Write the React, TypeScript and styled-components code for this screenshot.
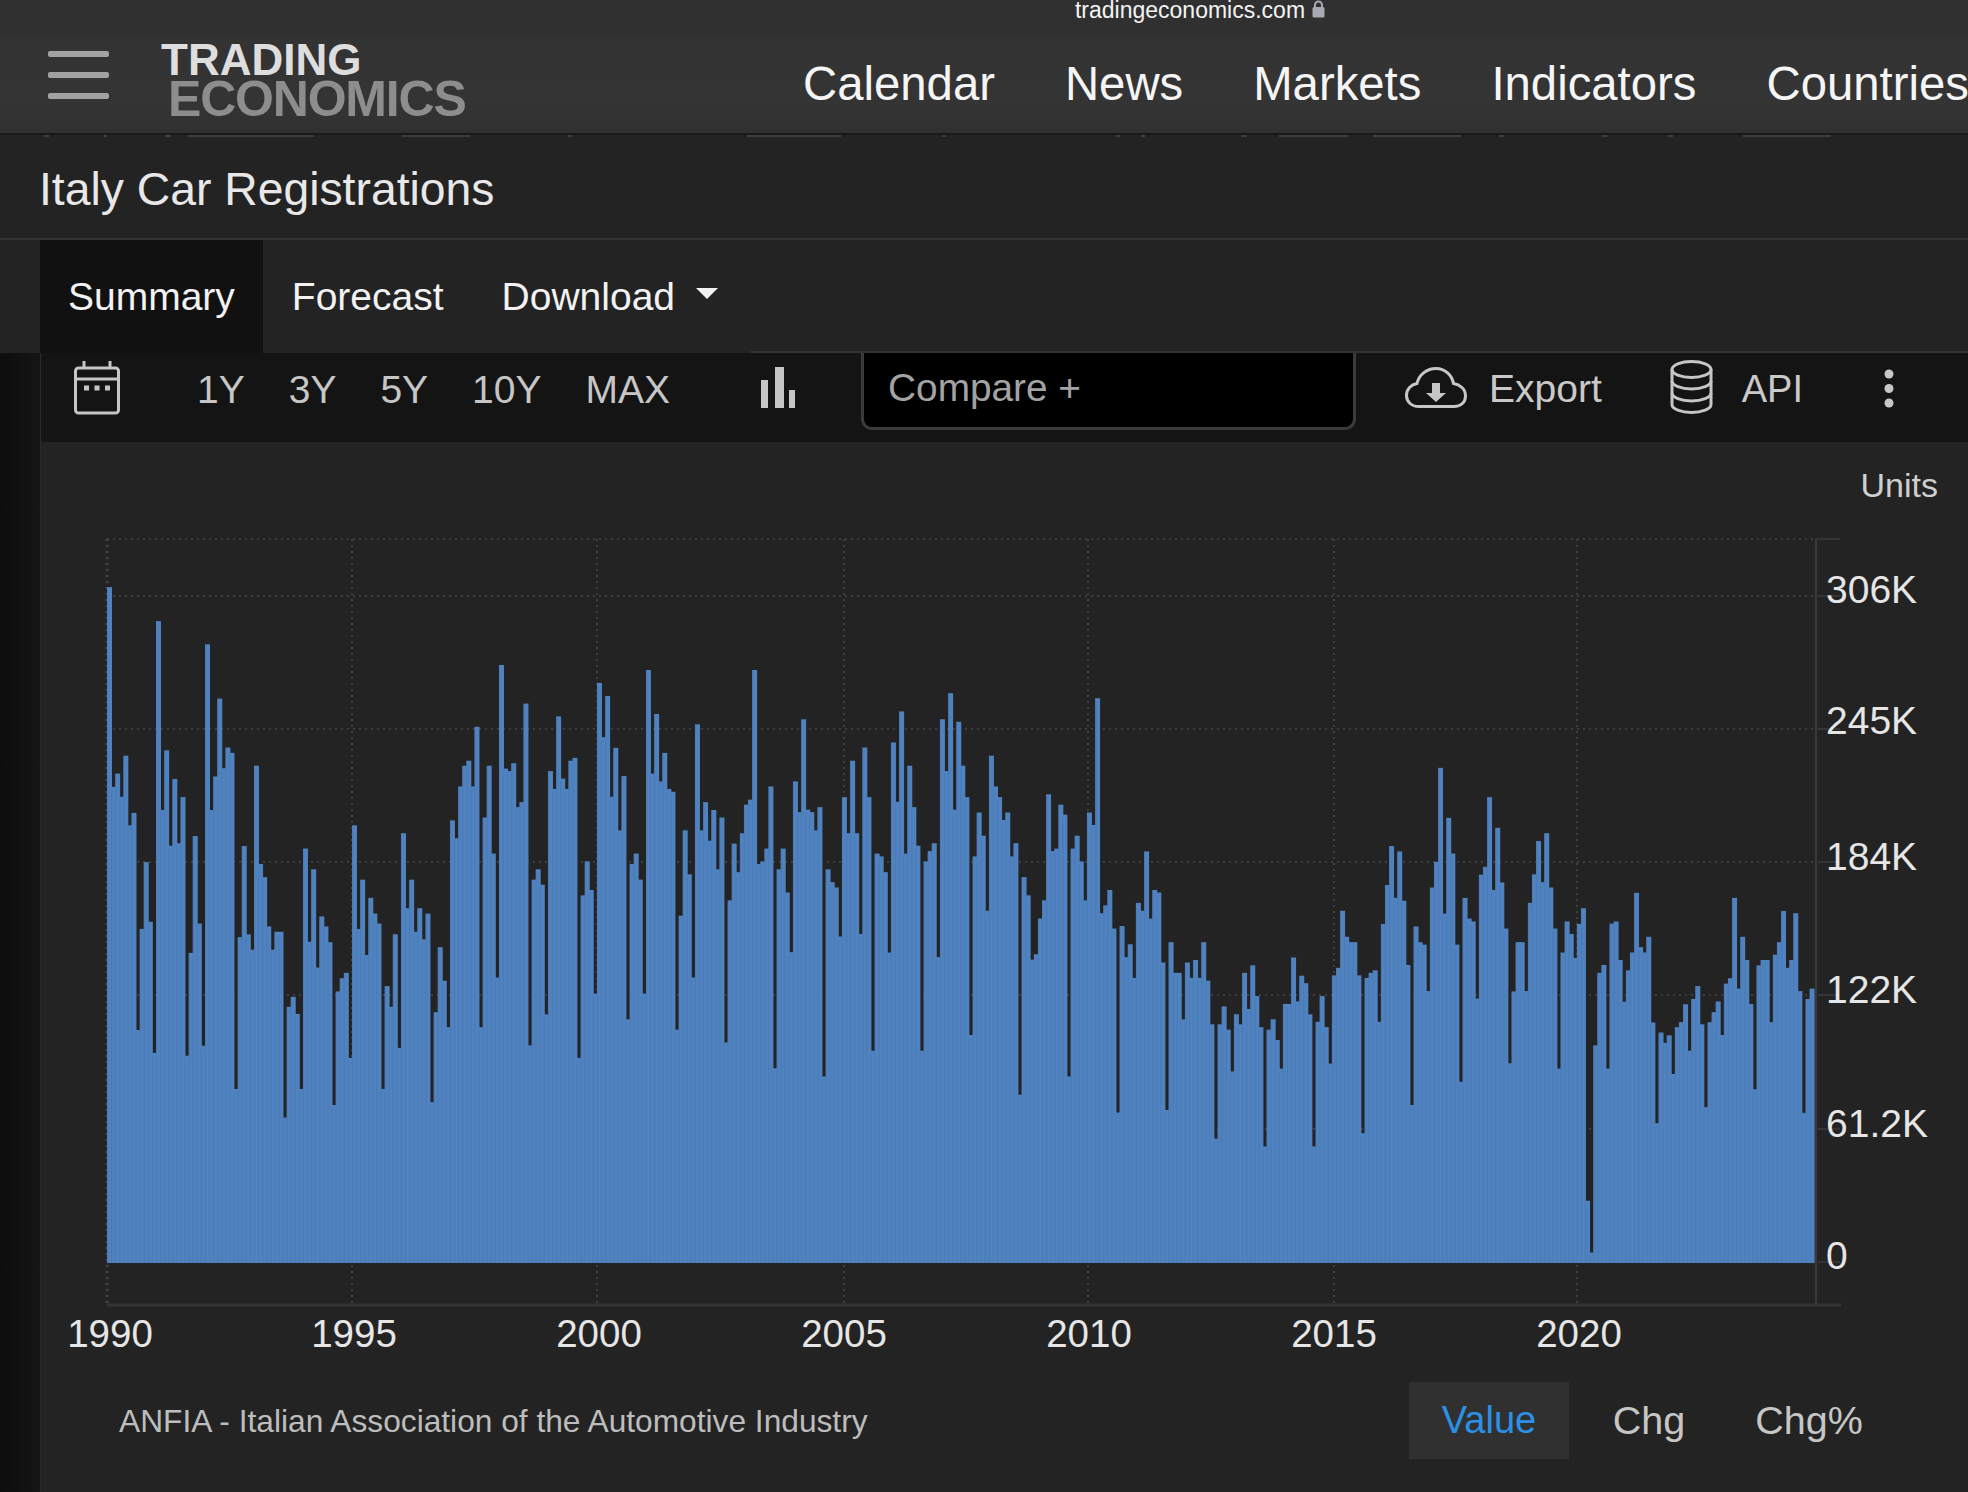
import React from 'react';
import styled, { createGlobalStyle } from 'styled-components';

const GlobalStyle = createGlobalStyle`
  html, body {
    margin: 0;
    padding: 0;
    background: #232323;
  }
  * {
    box-sizing: border-box;
  }
`;

const PageContainer = styled.div`
  display: flex;
  flex-direction: column;
  width: 1968px;
  height: 1492px;
  overflow: hidden;
  background: #232323;
  color: #e6e6e6;
  font-family: "Liberation Sans", Arial, sans-serif;
`;

const StatusBar = styled.div`
  display: flex;
  align-items: flex-start;
  justify-content: center;
  gap: 7px;
  height: 37px;
  padding-left: 432px;
  background: #303030;
  color: #f4f4f4;
  font-size: 23px;
  line-height: 20px;
  overflow: hidden;
`;

const NavBar = styled.div`
  display: flex;
  align-items: center;
  height: 98px;
  padding-left: 48px;
  background: linear-gradient(#333333, #343434 70%, #303030);
  border-bottom: 2px solid #191919;
  overflow: hidden;
`;

const Hamburger = styled.div`
  display: flex;
  flex-direction: column;
  gap: 15px;
  width: 61px;
  flex: none;
  margin-top: -20px;
`;

const HamburgerLine = styled.span`
  display: block;
  height: 6px;
  border-radius: 2px;
  background: #a2a2a2;
`;

const Logo = styled.div`
  display: flex;
  flex-direction: column;
  flex: none;
  width: 337px;
  margin-left: 52px;
  margin-top: -9px;
  font-weight: bold;
`;

const LogoTop = styled.span`
  font-size: 44px;
  line-height: 36px;
  color: #dedede;
`;

const LogoBottom = styled.span`
  font-size: 50px;
  line-height: 42px;
  margin-left: 7px;
  letter-spacing: -1.2px;
  color: #8d8d8d;
`;

const NavLinks = styled.nav`
  display: flex;
  gap: 70px;
  margin-left: 305px;
  margin-top: -3px;
`;

const NavLink = styled.span`
  font-size: 47.3px;
  color: #f5f5f5;
  white-space: nowrap;
`;

const TitleBand = styled.div`
  border-bottom: 2px solid #323232;
`;

const TickerPeek = styled.svg`
  display: block;
  width: 1968px;
  height: 4px;
`;

const Title = styled.h1`
  display: flex;
  align-items: center;
  height: 99px;
  margin: 0;
  padding-left: 39px;
  font-size: 46.3px;
  font-weight: normal;
  color: #e8e8e8;
`;

const TabRow = styled.div`
  display: flex;
  align-items: stretch;
  height: 113px;
  padding-left: 40px;
`;

const Tab = styled.div<{ $active?: boolean }>`
  display: flex;
  align-items: center;
  gap: 21px;
  padding: 0 ${(p) => (p.$active ? '28px' : '29px')};
  background: ${(p) => (p.$active ? '#111111' : 'transparent')};
  font-size: 39px;
  color: #f2f2f2;
`;

const Caret = styled.span`
  width: 0;
  height: 0;
  margin-top: -6px;
  border-left: 11px solid transparent;
  border-right: 11px solid transparent;
  border-top: 11px solid #f2f2f2;
`;

const TabRowRule = styled.div`
  flex: 1;
  align-self: flex-end;
  height: 2px;
  margin-left: 3px;
  background: #323232;
`;

const Workspace = styled.div`
  display: flex;
  flex: 1;
  min-height: 0;
`;

const SideRail = styled.div`
  flex: none;
  width: 40px;
  background: linear-gradient(90deg, #0d0d0d, #151515);
`;

const MainColumn = styled.div`
  display: flex;
  flex-direction: column;
  flex: 1;
  min-width: 0;
  border-left: 1px solid #2a2a2a;
`;

const Toolbar = styled.div`
  display: flex;
  align-items: flex-start;
  flex: none;
  height: 89px;
  padding-left: 33px;
  background: #141414;
  color: #c9c9c9;
`;

const ToolIcon = styled.svg<{ $left: number; $top: number }>`
  display: block;
  flex: none;
  margin-left: ${(p) => p.$left}px;
  margin-top: ${(p) => p.$top}px;
`;

const RangeGroup = styled.div`
  display: flex;
  gap: 44px;
  margin-left: 77px;
  height: 74px;
  align-items: center;
`;

const RangeButton = styled.span`
  font-size: 39px;
  color: #c6c6c6;
`;

const CompareBox = styled.div`
  display: flex;
  align-items: center;
  flex: none;
  width: 495px;
  height: 77px;
  margin-left: 66px;
  padding: 0 0 5px 24px;
  background: #000000;
  border: 3px solid #3b3b3b;
  border-top: none;
  border-radius: 0 0 11px 11px;
  font-size: 38.8px;
  color: #a3a3a3;
`;

const ToolLabel = styled.span<{ $left: number; $size: number }>`
  margin-left: ${(p) => p.$left}px;
  height: 72px;
  display: flex;
  align-items: center;
  font-size: ${(p) => p.$size}px;
  color: #c9c9c9;
`;

const UnitsRow = styled.div`
  display: flex;
  justify-content: flex-end;
  align-items: flex-start;
  flex: none;
  height: 89px;
  padding: 23px 30px 0 0;
  font-size: 34px;
  line-height: 40px;
  color: #cfcfcf;
`;

const ChartSvg = styled.svg`
  display: block;
  flex: none;
  width: 1927px;
  height: 829px;
`;

const AxisLabel = styled.text<{ $size: number }>`
  font-family: "Liberation Sans", Arial, sans-serif;
  font-size: ${(p) => p.$size}px;
  fill: #e6e6e6;
`;

const FooterRow = styled.div`
  display: flex;
  align-items: flex-start;
  justify-content: space-between;
  flex: none;
  padding: 22px 79px 0 78px;
`;

const SourceText = styled.div`
  height: 77px;
  padding-top: 2px;
  display: flex;
  align-items: center;
  font-size: 31.7px;
  color: #bdbdbd;
`;

const ValueTabs = styled.div`
  display: grid;
  grid-template-columns: repeat(3, 160px);
`;

const ValueTab = styled.div<{ $active?: boolean }>`
  display: flex;
  align-items: center;
  justify-content: center;
  height: 77px;
  background: ${(p) => (p.$active ? '#303030' : 'transparent')};
  color: ${(p) => (p.$active ? '#2b90e6' : '#c6c6c6')};
  font-size: ${(p) => (p.$active ? '38px' : '39.5px')};
`;

// bar tops by year, read off the chart. each group has its own offset and scale
const SCALE = 2.8;
const barGroups: { base: number; tops: number[] }[] = [
  {
    base: 570,
    tops: [
      48, 607, 570, 635, 520, 715, 680, 1288, 1005, 818, 985, 1352,
      143, 672, 505, 772, 585, 765, 636, 1360, 1072, 745, 990, 1332,
      208, 672, 578, 360, 555, 497, 512, 1453, 1028, 773, 1020, 1063,
      548, 823, 860, 998, 1063, 1013, 1013, 1533, 1223, 1195, 1243, 1453,
      780, 1041, 838, 1113, 970, 998, 1042, 1498, 1180, 1143, 1128, 1366,
      715, 1005, 867, 1078, 918, 962, 990, 1453, 1165, 1223, 1020, 1338,
      737, 947, 867, 1013, 947, 1034, 962, 1490, 1238, 1056, 1150, 1280,
    ],
  },
  {
    base: 640,
    tops: [
      505, 555, 410, 352, 338, 410, 243, 1084, 497, 352, 598, 945,
      70, 360, 367, 345, 468, 454, 178, 1135, 671, 642, 685, 1048,
      367, 417, 214, 388, 417, 338, 330, 1170, 715, 620, 700, 990,
      120, 272, 157, 439, 302, 533, 381, 1062, 627, 598, 671, 990,
      84, 374, 207, 396, 316, 417, 425, 1091, 772, 533, 656, 945,
      236, 533, 454, 562, 476, 642, 497, 1127, 729, 570, 650, 541,
      461, 447, 84, 627, 620, 584, 410, 1199, 642, 584, 707, 874,
    ],
  },
  {
    base: 650,
    tops: [
      368, 454, 194, 447, 454, 505, 440, 1194, 614, 650, 665, 802,
      412, 513, 310, 513, 795, 273, 412, 1122, 570, 578, 622, 847,
      259, 425, 172, 570, 324, 440, 548, 1122, 592, 563, 541, 860,
      194, 339, 121, 447, 201, 324, 412, 1078, 578, 455, 520, 730,
      296, 382, 412, 476, 455, 578, 541, 1245, 636, 687, 867, 852,
      752, 701, 404, 563, 556, 433, 461, 1194, 556, 520, 592, 701,
      455, 490, 135, 737, 715, 672, 780, 1295, 773, 860, 824, 918,
    ],
  },
  {
    base: 700,
    tops: [
      568, 590, 424, 612, 532, 539, 735, 1148, 678, 764, 764, 894,
      735, 778, 728, 778, 678, 786, 908, 1228, 908, 858, 923, 1040,
      880, 908, 764, 865, 743, 829, 916, 1250, 923, 894, 952, 1032,
      851, 851, 721, 844, 772, 793, 880, 1250, 901, 829, 916, 1018,
      771, 750, 590, 663, 678, 678, 771, 1213, 778, 764, 757, 901,
      627, 518, 409, 554, 424, 562, 742, 1134, 634, 678, 685, 815,
      525, 453, 190, 598, 330, 430, 685, 1069, 554, 612, 620, 836,
    ],
  },
  {
    base: 700,
    tops: [
      489, 467, 272, 532, 358, 511, 640, 1017, 816, 678, 678, 815,
      568, 488, 395, 510, 373, 525, 640, 1032, 707, 620, 655, 722,
      627, 583, 1402, 1547, 967, 764, 742, 1032, 626, 620, 728, 845,
      757, 707, 540, 692, 707, 663, 903, 1185, 931, 960, 939, 1047,
      916, 902, 852, 982, 837, 801, 908, 1140, 902, 874, 844, 938,
      794, 779, 554, 808, 663, 728, 851, 1090, 743, 728, 728, 902,
      713, 678, 591, 750, 728, 597, 815, 1156, 837, 808,
    ],
  },
];

const barTops = barGroups.flatMap((g) => g.tops.map((t) => g.base + t / SCALE));

const BASELINE = 1263;
const BAR_STEP = 4.083;
const BAR_WIDTH = 5;
const FIRST_BAR_X = 107;

const gridYs = [596, 729, 862, 995, 1129];
const yLabels = [
  { text: '306K', y: 603 },
  { text: '245K', y: 734 },
  { text: '184K', y: 870 },
  { text: '122K', y: 1003 },
  { text: '61.2K', y: 1137 },
  { text: '0', y: 1269 },
];
const xTicks = [
  { x: 352, labelX: 354, text: '1995' },
  { x: 597, labelX: 599, text: '2000' },
  { x: 844, labelX: 844, text: '2005' },
  { x: 1088, labelX: 1089, text: '2010' },
  { x: 1334, labelX: 1334, text: '2015' },
  { x: 1577, labelX: 1579, text: '2020' },
];

const tickerMarks = [
  [44, 5], [104, 3], [165, 6], [188, 126], [402, 68], [568, 4], [747, 94], [942, 4],
  [1116, 4], [1141, 4], [1241, 6], [1279, 69], [1373, 88], [1499, 5], [1602, 6], [1668, 5], [1743, 88],
];

const Chart = () => (
  <ChartSvg viewBox="41 531 1927 829">
    {/* grid */}
    <line x1={107} x2={1816} y1={539} y2={539} stroke="#3e3e3e" strokeWidth={2} strokeDasharray="2 4" />
    {gridYs.map((y) => (
      <line key={y} x1={107} x2={1816} y1={y} y2={y} stroke="#3e3e3e" strokeWidth={2} strokeDasharray="2 4" />
    ))}
    <line x1={107} x2={107} y1={539} y2={1305} stroke="#444444" strokeWidth={3} strokeDasharray="2 4" />
    {xTicks.map((t) => (
      <line key={t.x} x1={t.x} x2={t.x} y1={539} y2={1305} stroke="#3e3e3e" strokeWidth={2} strokeDasharray="2 4" />
    ))}

    {/* axes */}
    <line x1={1816} x2={1816} y1={539} y2={1305} stroke="#3a3a3a" strokeWidth={2} />
    {gridYs.concat(539, 1262).map((y) => (
      <line key={y} x1={1816} x2={1840} y1={y} y2={y} stroke="#343434" strokeWidth={2} />
    ))}
    <line x1={107} x2={1841} y1={1305} y2={1305} stroke="#343434" strokeWidth={3} />

    {/* bars */}
    {barTops.map((top, i) => {
      const x = FIRST_BAR_X + i * BAR_STEP;
      return (
        <g key={i}>
          <rect x={x} y={top} width={BAR_WIDTH} height={BASELINE - top} fill="#4f82bf" />
          <line x1={x + 0.5} x2={x + 0.5} y1={top + 3} y2={BASELINE} stroke="#4573ab" strokeOpacity={0.4} strokeWidth={1} />
        </g>
      );
    })}

    {yLabels.map((l) => (
      <AxisLabel key={l.text} $size={39} x={1826} y={l.y}>
        {l.text}
      </AxisLabel>
    ))}
    <AxisLabel $size={38.5} x={110} y={1347} textAnchor="middle">
      1990
    </AxisLabel>
    {xTicks.map((t) => (
      <AxisLabel key={t.text} $size={38.5} x={t.labelX} y={1347} textAnchor="middle">
        {t.text}
      </AxisLabel>
    ))}
  </ChartSvg>
);

export default function App() {
  return (
    <PageContainer>
      <GlobalStyle />
      <StatusBar>
        <span>tradingeconomics.com</span>
        <svg width="13" height="18" viewBox="0 0 13 18">
          <path d="M3 8V5a3.5 3.5 0 0 1 7 0v3" fill="none" stroke="#a9a9b1" strokeWidth="2" />
          <rect x="0.5" y="7" width="12" height="10.5" rx="1.5" fill="#a9a9b1" />
        </svg>
      </StatusBar>
      <NavBar>
        <Hamburger>
          <HamburgerLine />
          <HamburgerLine />
          <HamburgerLine />
        </Hamburger>
        <Logo>
          <LogoTop>TRADING</LogoTop>
          <LogoBottom>ECONOMICS</LogoBottom>
        </Logo>
        <NavLinks>
          <NavLink>Calendar</NavLink>
          <NavLink>News</NavLink>
          <NavLink>Markets</NavLink>
          <NavLink>Indicators</NavLink>
          <NavLink>Countries</NavLink>
        </NavLinks>
      </NavBar>

      <TitleBand>
        <TickerPeek viewBox="0 0 1968 4">
          {tickerMarks.map(([x, w]) => (
            <rect key={x} x={x} y={0} width={w} height={2} fill="#3d3d3d" />
          ))}
        </TickerPeek>
        <Title>Italy Car Registrations</Title>
      </TitleBand>

      <TabRow>
        <Tab $active>Summary</Tab>
        <Tab>Forecast</Tab>
        <Tab>
          Download
          <Caret />
        </Tab>
        <TabRowRule />
      </TabRow>

      <Workspace>
        <SideRail />
        <MainColumn>
          <Toolbar>
            <ToolIcon $left={0} $top={8} width="46" height="54" viewBox="0 0 46 54" fill="none" stroke="#c6c6c6" strokeWidth="3">
              <rect x="1.5" y="7" width="43" height="45" rx="3" />
              <path d="M1.5 18h43M10 7V0M36 7V0" />
              <path d="M10 27h5M20.5 27h5M31 27h5" strokeWidth="5" />
            </ToolIcon>
            <RangeGroup>
              <RangeButton>1Y</RangeButton>
              <RangeButton>3Y</RangeButton>
              <RangeButton>5Y</RangeButton>
              <RangeButton>10Y</RangeButton>
              <RangeButton>MAX</RangeButton>
            </RangeGroup>
            <ToolIcon $left={91} $top={14} width="34" height="41" viewBox="0 0 34 41" fill="#c6c6c6">
              <rect x="0" y="13" width="7" height="28" />
              <rect x="14" y="0" width="9" height="41" />
              <rect x="28" y="23" width="6" height="18" />
            </ToolIcon>
            <CompareBox>Compare +</CompareBox>
            <ToolIcon $left={49} $top={14} width="62" height="41" viewBox="0 0 62 41">
              <path
                d="M14 39.5C6 39.5 1.5 34.5 1.5 28.5C1.5 22 6 17.5 12 16.5C14 7.5 22 1.5 31 1.5C40 1.5 47 8 48.5 16.5C55 17.5 60.5 22 60.5 29C60.5 35 56 39.5 49 39.5Z"
                fill="none"
                stroke="#c6c6c6"
                strokeWidth="3"
              />
              <path d="M27 16h8v10h6L31 35 21 26h6z" fill="#c6c6c6" />
            </ToolIcon>
            <ToolLabel $left={22} $size={39}>Export</ToolLabel>
            <ToolIcon $left={68} $top={7} width="43" height="54" viewBox="0 0 43 54" fill="none" stroke="#c6c6c6" strokeWidth="3">
              <ellipse cx="21.5" cy="9.5" rx="19.5" ry="8" />
              <path d="M2 9.5V44.5C2 49 11 52.5 21.5 52.5S41 49 41 44.5V9.5" />
              <path d="M2 21C2 25.5 11 29 21.5 29S41 25.500 41 21" />
              <path d="M2 33C2 37.5 11 41 21.5 41S41 37.500 41 33" />
            </ToolIcon>
            <ToolLabel $left={29} $size={38}>API</ToolLabel>
            <ToolIcon $left={81} $top={16} width="10" height="39" viewBox="0 0 10 39" fill="#c6c6c6">
              <circle cx="5" cy="5" r="4.5" />
              <circle cx="5" cy="19.5" r="4.5" />
              <circle cx="5" cy="34" r="4.5" />
            </ToolIcon>
          </Toolbar>

          <UnitsRow>Units</UnitsRow>
          <Chart />

          <FooterRow>
            <SourceText>ANFIA - Italian Association of the Automotive Industry</SourceText>
            <ValueTabs>
              <ValueTab $active>Value</ValueTab>
              <ValueTab>Chg</ValueTab>
              <ValueTab>Chg%</ValueTab>
            </ValueTabs>
          </FooterRow>
        </MainColumn>
      </Workspace>
    </PageContainer>
  );
}
